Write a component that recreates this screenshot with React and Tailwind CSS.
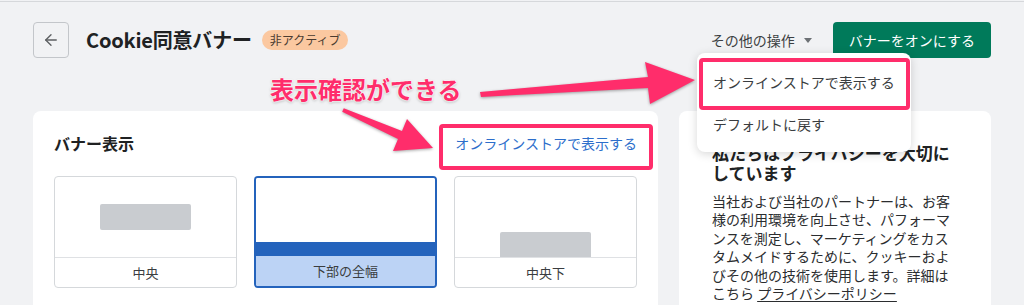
import { ArrowLeft } from 'lucide-react';

const tiles = [
  { key: 'center', label: '中央' },
  { key: 'bottom', label: '下部の全幅', active: true },
  { key: 'bottom-center', label: '中央下' },
];

function Tile({ tile }) {
  if (tile.active) {
    return (
      <div className="flex h-[112px] flex-col overflow-hidden rounded-[4px] border-2 border-[#2463bc]">
        <div className="flex-1 bg-white" />
        <div className="h-[14px] bg-[#2463bc]" />
        <div className="flex h-[30px] items-center justify-center bg-[#bcd3f5] text-[13px] text-[#3a3d40]">
          {tile.label}
        </div>
      </div>
    );
  }
  return (
    <div className="flex h-[112px] flex-col overflow-hidden rounded-[4px] border border-[#d5d8db]">
      {tile.key === 'center' ? (
        <div className="flex flex-1 items-center justify-center">
          <div className="h-[26px] w-[91px] rounded-[2px] bg-[#c9ccd0]" />
        </div>
      ) : (
        <div className="flex flex-1 items-end justify-center">
          <div className="h-[25px] w-[91px] rounded-t-[2px] bg-[#c9ccd0]" />
        </div>
      )}
      <div className="flex h-[30px] items-center justify-center border-t border-[#dfe1e4] text-[13px] text-[#3a3d40]">
        {tile.label}
      </div>
    </div>
  );
}

export default function App() {
  return (
    <div className="relative h-[305px] w-[1024px] overflow-hidden bg-[#f1f2f4] font-['Noto_Sans_CJK_JP',sans-serif] text-[#202223]">
      <div className="h-px" />
      <div className="h-px bg-[#d6d8db]" />

      {/* header */}
      <div className="flex h-[36px] items-center px-[33px] mt-[20px]">
        <button
          type="button"
          className="flex h-[36px] w-[36px] items-center justify-center rounded-[4px] border border-[#c3c6ca] text-[#5c5f62]"
        >
          <ArrowLeft className="h-[18px] w-[18px]" strokeWidth={1.8} />
        </button>
        <h1 className="ml-[17px] text-[20px] font-semibold leading-none tracking-[-0.2px]">Cookie同意バナー</h1>
        <span className="ml-[10px] inline-flex h-[20px] items-center rounded-full bg-[#fbc8a0] px-[8px] text-[12px] text-[#4a3b30]">
          非アクティブ
        </span>
        <div className="ml-auto flex items-center text-[14px] text-[#3c3f42]">
          <span>その他の操作</span>
          <svg className="ml-[9px]" width="8" height="5" viewBox="0 0 8 5">
            <path d="M0 0h8L4 5z" fill="#6d7175" />
          </svg>
        </div>
        <button
          type="button"
          className="ml-[21px] flex h-[36px] items-center rounded-[4px] bg-[#007a5a] px-[16px] text-[14px] text-white"
        >
          バナーをオンにする
        </button>
      </div>

      {/* cards */}
      <div className="mt-[53px] flex gap-[21px] px-[33px]">
        <div className="relative h-[220px] w-[625px] rounded-[8px] bg-white px-[21px] pt-[20px]">
          <div className="flex h-[24px] items-center justify-between">
            <h2 className="text-[16px] font-semibold">バナー表示</h2>
            <a className="text-[14px] text-[#2c6ecb]">オンラインストアで表示する</a>
          </div>
          <div className="mt-[21px] grid grid-cols-3 gap-[17px]">
            {tiles.map((t) => (
              <Tile key={t.key} tile={t} />
            ))}
          </div>
          <div className="absolute left-[406px] top-[13px] h-[46px] w-[214px] rounded-[4px] border-4 border-[#ff2d6b]" />
        </div>

        <div className="h-[220px] w-[312px] rounded-[8px] bg-white px-[33px] pt-[32px]">
          <h3 className="text-[17px] font-bold leading-[20px]">
            私たちはプライバシーを大切に
            <br />
            しています
          </h3>
          <p className="mt-[9px] text-[14px] leading-[18.4px] text-[#2b2d2f]">
            <span className="block whitespace-nowrap">当社および当社のパートナーは、お客</span>
            <span className="block whitespace-nowrap">様の利用環境を向上させ、パフォーマ</span>
            <span className="block whitespace-nowrap">ンスを測定し、マーケティングをカス</span>
            <span className="block whitespace-nowrap">タムメイドするために、クッキーおよ</span>
            <span className="block whitespace-nowrap">びその他の技術を使用します。詳細は</span>
            <span className="block whitespace-nowrap">
              こちら <span className="underline underline-offset-2">プライバシーポリシー</span>
            </span>
          </p>
        </div>
      </div>

      {/* dropdown menu */}
      <div className="absolute left-[697px] top-[53px] w-[214px] rounded-[8px] bg-white pb-[7px] pt-[8px] shadow-[0_2px_10px_rgba(0,0,0,0.16)]">
        <div className="flex h-[42px] items-center px-[16px] text-[14px] text-[#3a3d40]">オンラインストアで表示する</div>
        <div className="flex h-[42px] items-center px-[16px] text-[14px] text-[#3a3d40]">デフォルトに戻す</div>
        <div className="absolute left-[2px] top-[5px] h-[52px] w-[211px] rounded-[4px] border-4 border-[#ff2d6b]" />
      </div>

      {/* annotation */}
      <div className="absolute left-[270px] top-[73px] text-[24px] font-bold leading-[32px] text-[#ff2d6b] [text-shadow:0_0_2px_#fff,0_0_2px_#fff,0_0_2px_#fff,0_1px_3px_rgba(0,0,0,0.35)]">
        表示確認ができる
      </div>
      <svg
        className="pointer-events-none absolute left-0 top-0 drop-shadow-[0_1px_1.5px_rgba(0,0,0,0.35)]"
        width="1024"
        height="305"
        viewBox="0 0 1024 305"
      >
        <polygon points="480,92 648,77 645,62 695,80 650,104 648,88 481,97" fill="#ff2d6b" />
        <polygon points="343.8,108.2 402,131 407,119 433,148 393,151 398,139 342.2,111.8" fill="#ff2d6b" />
      </svg>
    </div>
  );
}
